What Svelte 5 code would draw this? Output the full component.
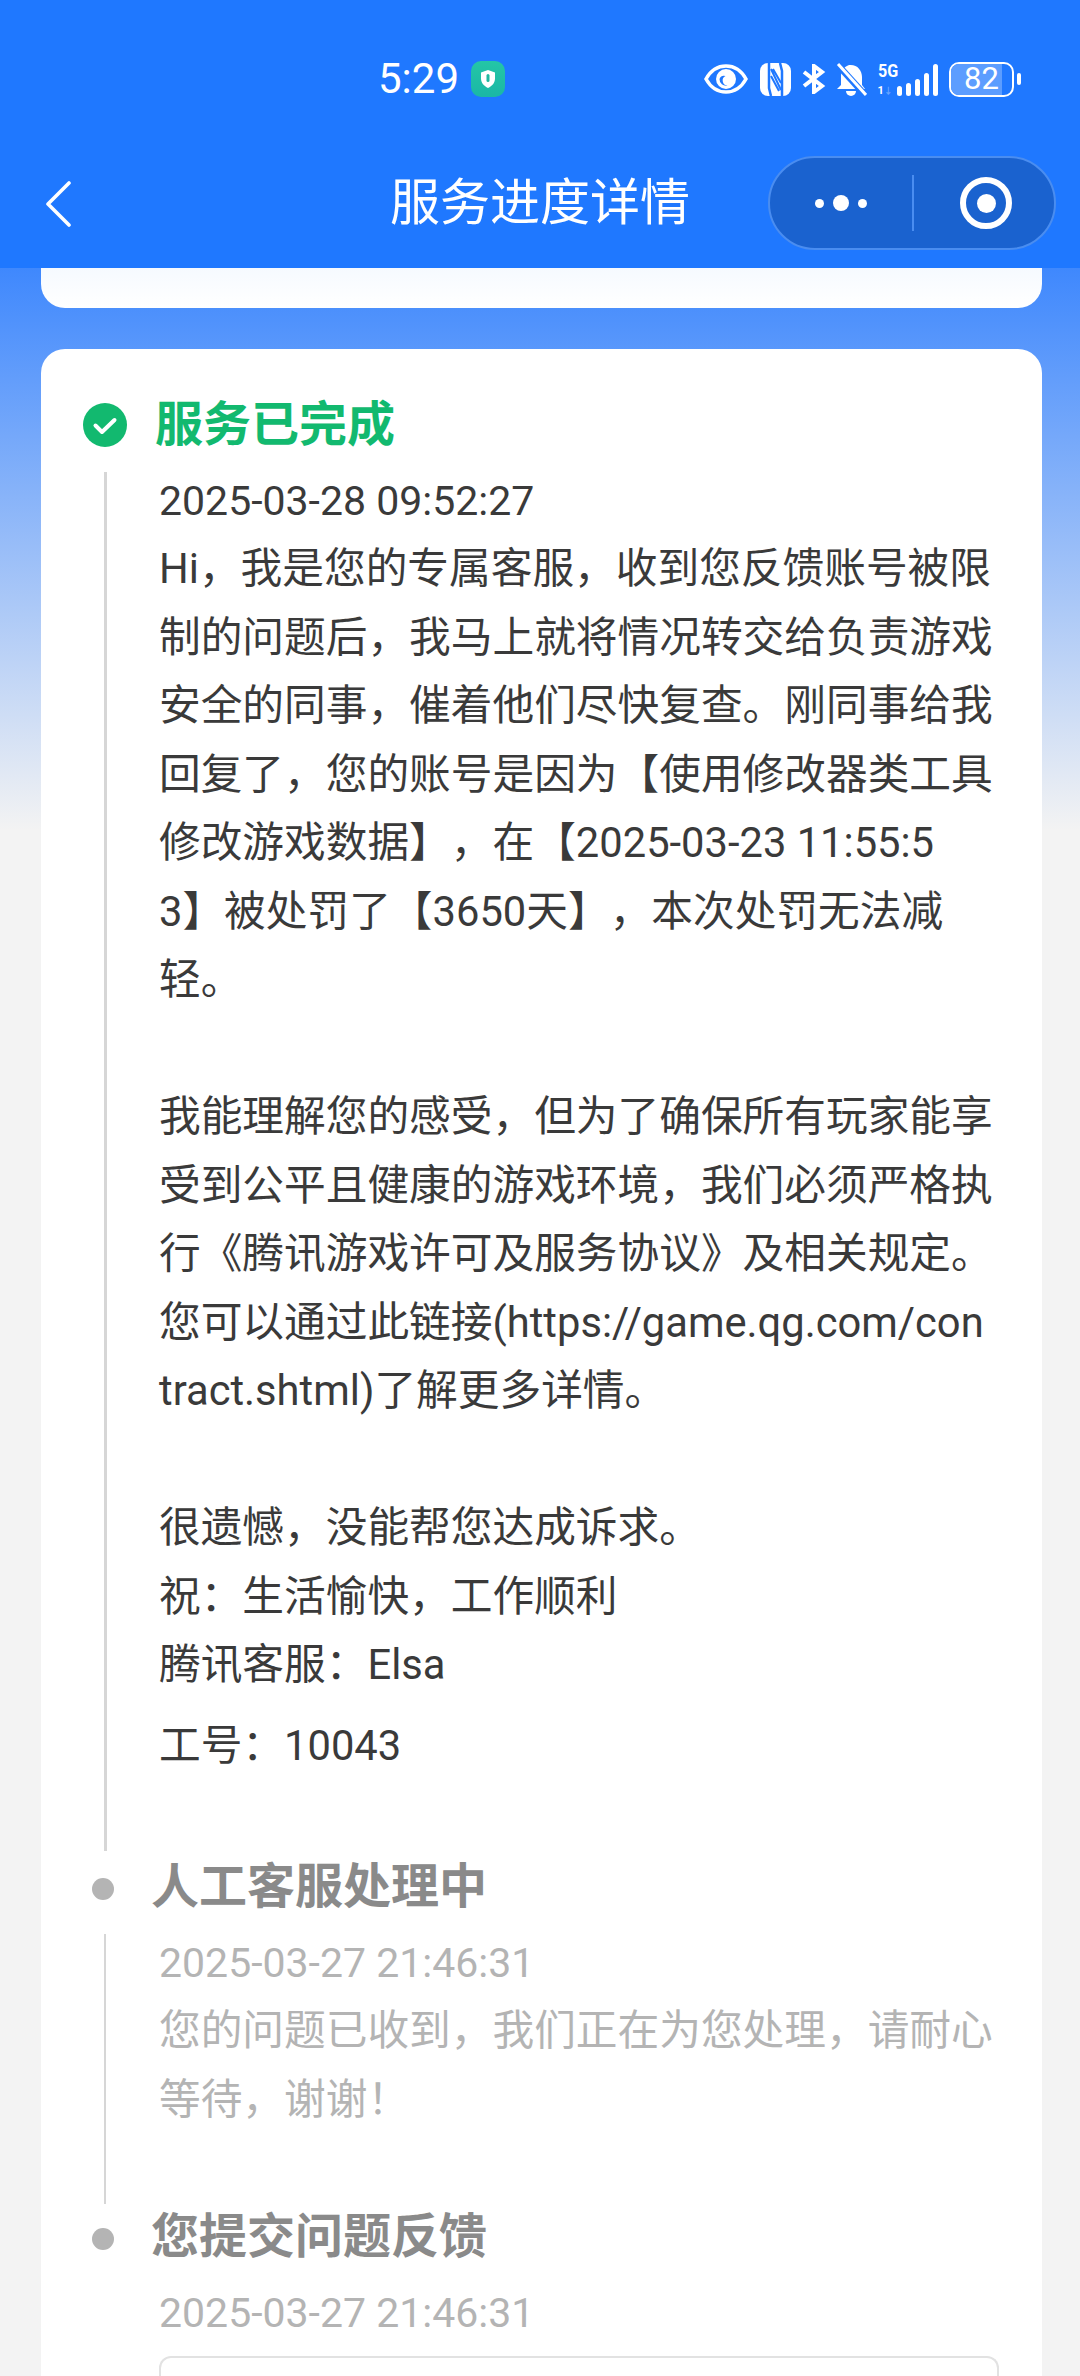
<script>
  const first = [
    'Hi，我是您的专属客服，收到您反馈账号被限',
    '制的问题后，我马上就将情况转交给负责游戏',
    '安全的同事，催着他们尽快复查。刚同事给我',
    '回复了，您的账号是因为【使用修改器类工具',
    '修改游戏数据】，在【2025-03-23 11:55:5',
    '3】被处罚了【3650天】，本次处罚无法减',
    '轻。',
    '',
    '我能理解您的感受，但为了确保所有玩家能享',
    '受到公平且健康的游戏环境，我们必须严格执',
    '行《腾讯游戏许可及服务协议》及相关规定。',
    '您可以通过此链接(https://game.qg.com/con',
    'tract.shtml)了解更多详情。',
    '',
    '很遗憾，没能帮您达成诉求。',
    '祝：生活愉快，工作顺利',
    '腾讯客服：Elsa'
  ];
  const second = ['您的问题已收到，我们正在为您处理，请耐心', '等待，谢谢！'];
</script>

<div class="page">
  <header class="head">
    <div class="status">
      <div class="clock">
        <span class="time">5:29</span>
        <span class="shield">
          <svg viewBox="0 0 34 34" width="34" height="34">
            <path d="M17 8l7 2.500v6c0 4.500-3 7.500-7 9.500-4-2-7-5-7-9.500v-6z" fill="#fff"/>
            <rect x="15.500" y="12" width="3" height="8" rx="1.500" fill="#1fb8a0"/>
          </svg>
        </span>
      </div>
      <div class="sysicons">
        <svg viewBox="0 0 44 30" width="44" height="30" fill="none">
          <path d="M2 15C7 6 14 2 22 2s15 4 20 13c-5 9-12 13-20 13S7 24 2 15z" stroke="#fff" stroke-width="3.500"/>
          <circle cx="22" cy="15" r="10" fill="#fff"/>
          <path d="M15.500 15a6.500 6.500 0 0 0 8 6.500 5 5 0 0 1-2-9.500 5 5 0 0 0-6 3z" fill="#1f78ff"/>
        </svg>
        <svg class="nfc" viewBox="0 0 31 33" width="31" height="33">
          <rect width="31" height="33" rx="8" fill="#fff"/>
          <path d="M9 0v25l2 8M22 33V8l-2-8" fill="none" stroke="#1f78ff" stroke-width="2.500"/>
          <path d="M11 6l10 21M11 13l8 15M13 6l8 14" fill="none" stroke="#1f78ff" stroke-width="2"/>
        </svg>
        <svg class="bt" viewBox="0 0 24 30" width="24" height="30" fill="none" stroke="#fff" stroke-width="4">
          <path d="M2 8l18 14-8 6V2l8 6L2 22"/>
        </svg>
        <svg class="bell" viewBox="0 0 32 33" width="32" height="33">
          <path d="M14 2c8-1 13 5 13 12v8l3 4H2l4-4V13c0-4 2-9 8-11z" fill="#fff"/>
          <path d="M11 28h10a5 5 0 0 1-10 0z" fill="#fff"/>
          <path d="M2 1l29 32" stroke="#1f78ff" stroke-width="6.500"/>
          <path d="M3 1l28 31" stroke="#fff" stroke-width="3"/>
        </svg>
        <div class="signal">
          <div class="net"><span class="g">5G</span><span class="one">1<i>↓</i></span></div>
          <div class="bars"><b class="b1"></b><b class="b2"></b><b class="b3"></b><b class="b4"></b><b class="b5"></b></div>
        </div>
        <div class="batt"><div class="cell"><div class="fill"></div><span>82</span></div><i class="cap"></i></div>
      </div>
    </div>
    <nav class="nav">
      <svg class="back" viewBox="0 0 26 46" width="26" height="46" fill="none">
        <path d="M24 2L3 23l21 21" stroke="#fff" stroke-width="3.600" stroke-linecap="round" stroke-linejoin="round"/>
      </svg>
      <h1>服务进度详情</h1>
      <div class="capsule">
        <div class="more"><i></i><i class="mid"></i><i></i></div>
        <div class="sep"></div>
        <div class="target"><i></i></div>
      </div>
    </nav>
  </header>

  <main class="content">
    <div class="card stub"></div>
    <section class="card detail">
      <div class="step">
        <span class="ok">
          <svg viewBox="0 0 44 44" width="44" height="44">
            <circle cx="22" cy="22" r="22" fill="#12b96f"/>
            <path d="M12.500 22.500l6.500 6.500 12.500-12" fill="none" stroke="#fff" stroke-width="4" stroke-linecap="round" stroke-linejoin="round"/>
          </svg>
        </span>
        <h2 class="green">服务已完成</h2>
      </div>
      <div class="body first">
        <p class="date">2025-03-28 09:52:27</p>
        {#each first as l}<p class="ln">{l || '\u00a0'}</p>{/each}
        <p class="ln sign">工号：10043</p>
      </div>

      <div class="step second"><span class="dot"></span><h2>人工客服处理中</h2></div>
      <div class="body mute two">
        <p class="date">2025-03-27 21:46:31</p>
        {#each second as l}<p class="ln">{l}</p>{/each}
      </div>

      <div class="step third"><span class="dot"></span><h2>您提交问题反馈</h2></div>
      <div class="body mute last">
        <p class="date">2025-03-27 21:46:31</p>
        <div class="box"></div>
      </div>
    </section>
  </main>
</div>

<style>
  :global(body) { margin: 0; }
  .page {
    width: 1080px; height: 2376px; overflow: hidden;
    font-family: Roboto, "Noto Sans CJK SC", sans-serif;
    background: linear-gradient(#3f88fd 268px, #f3f3f3 830px);
    color: #3a3a3a;
    text-spacing-trim: space-all;
  }
  p, h1, h2 { margin: 0; font-weight: 400; }

  .head { height: 268px; background: #1f78ff; color: #fff; box-sizing: border-box; }
  .status { height: 156px; display: flex; justify-content: space-between; align-items: flex-start; padding: 61px 59px 0 378px; box-sizing: border-box; }
  .clock { display: flex; align-items: center; gap: 11px; height: 36px; }
  .time { font-size: 42px; line-height: 36px; }
  .shield { width: 34px; height: 36px; border-radius: 10px; background: linear-gradient(#24c6a6, #1ab7a6); display: flex; align-items: center; justify-content: center; margin-left: 1px; }
  .sysicons { display: flex; align-items: center; height: 36px; }
  .sysicons svg { display: block; flex: none; }
  .nfc { margin-left: 12px; }
  .bt { margin-left: 11px; }
  .bell { margin-left: 9px; }
  .signal { display: flex; align-items: flex-end; height: 33px; margin-left: 11px; }
  .net { display: flex; flex-direction: column; width: 23px; font-weight: 700; gap: 7px; margin-right: -4px; }
  .g { font-size: 19px; line-height: 17px; transform: scaleX(.85); transform-origin: left; white-space: nowrap; }
  .one { font-size: 11px; line-height: 9px; }
  .one i { color: #6aa6ff; font-style: normal; font-size: 9px; }
  .bars { display: flex; align-items: flex-end; gap: 3.500px; }
  .bars b { width: 5.500px; background: #fff; border-radius: 3px; }
  .b1 { height: 10px; } .b2 { height: 13px; } .b3 { height: 17px; } .b4 { height: 23px; } .b5 { height: 32px; }
  .batt { display: flex; align-items: center; gap: 3px; margin-left: 11px; }
  .cell { position: relative; width: 61px; height: 31px; border: 2.500px solid #fff; border-radius: 10px; display: flex; align-items: center; justify-content: center; overflow: hidden; box-sizing: content-box; }
  .fill { position: absolute; left: 0; top: 0; bottom: 0; width: 84%; background: #5c9dff; }
  .cell span { position: relative; font-size: 31px; line-height: 30px; }
  .cap { width: 4px; height: 12px; border-radius: 2px; background: #fff; }

  .nav { position: relative; height: 112px; display: flex; align-items: center; justify-content: center; }
  .back { position: absolute; left: 45px; top: 25px; }
  h1 { font-size: 50px; line-height: 94px; margin: -18px 0 0 0; }
  .capsule { position: absolute; left: 768px; top: 0; width: 288px; height: 94px; box-sizing: border-box; border: 2px solid #4a8df0; border-radius: 47px; background: #1a62cf; display: flex; align-items: center; }
  .more { width: 142px; display: flex; align-items: center; justify-content: center; gap: 9px; }
  .more i { width: 9px; height: 9px; border-radius: 50%; background: #fff; }
  .more .mid { width: 16px; height: 16px; }
  .sep { width: 2px; height: 56px; background: #4a8df0; }
  .target { margin-left: 46px; width: 52px; height: 52px; box-sizing: border-box; border: 6px solid #fff; border-radius: 50%; display: flex; align-items: center; justify-content: center; }
  .target i { width: 19px; height: 19px; border-radius: 50%; background: #fff; }

  .content { padding: 0 38px 0 41px; }
  .card { background: #fff; border-radius: 24px; }
  .stub { height: 40px; border-radius: 0 0 24px 24px; background: linear-gradient(#f6faff, #fff); }
  .detail { margin-top: 41px; padding: 40px 41px 0 42px; }

  .step { display: flex; align-items: center; height: 72px; }
  .ok { width: 44px; height: 44px; display: block; margin-right: 28px; }
  .ok svg { display: block; }
  h2 { font-size: 48px; line-height: 72px; font-weight: 700; color: #8a8a8a; }
  .green { color: #12b96f; }
  .dot { width: 22px; height: 22px; border-radius: 50%; background: #b4b4b4; margin: 4px 37px 0 9px; flex: none; }

  .body { margin-left: 21px; padding-left: 52px; border-left: 3px solid #d6d6d6; }
  .date { font-size: 41px; line-height: 66px; margin: -5px 0 1px; }
  .ln { font-size: 41.700px; line-height: 68.500px; white-space: nowrap; }
  .sign { margin-top: 12px; }
  .first { height: 1379px; box-sizing: border-box; margin-top: 11px; padding-top: 1px; }
  .second { margin-top: 0; }
  .two { margin-top: 11px; height: 270px; box-sizing: border-box; border-left-width: 2px; padding-left: 53px; padding-top: 1px; }
  .third { margin-top: -3px; }
  .mute { color: #b4b4b4; }
  .last { border-left: 0; padding-left: 55px; margin-top: 12px; }
  .box { margin-top: 10px; width: 840px; height: 60px; box-sizing: border-box; border: 2px solid #e2e2e2; border-bottom: 0; border-radius: 12px 12px 0 0; }
</style>
